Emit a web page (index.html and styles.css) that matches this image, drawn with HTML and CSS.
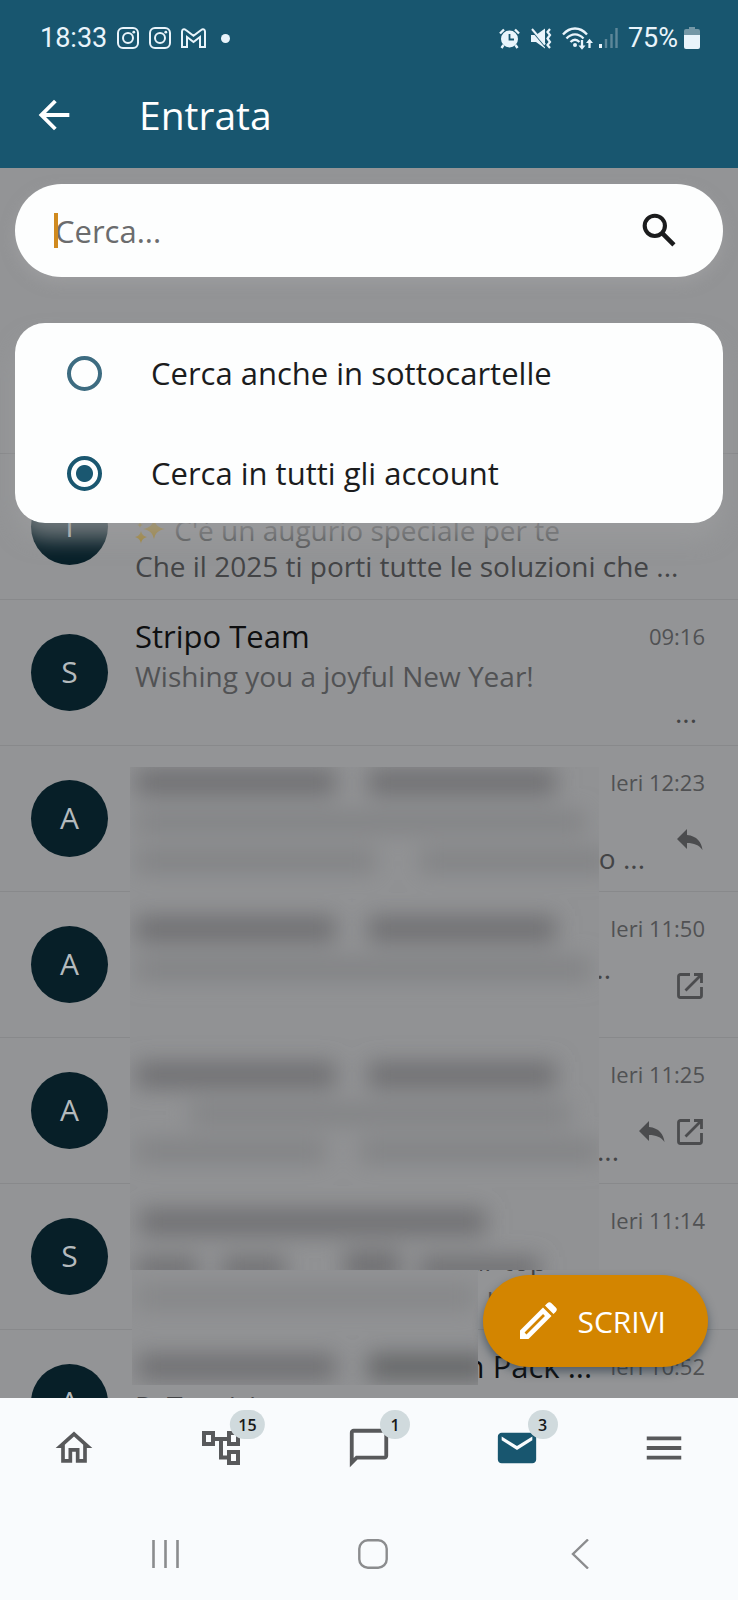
FILE: index.html
```html
<!DOCTYPE html>
<html lang="it">
<head>
<meta charset="utf-8">
<meta name="viewport" content="width=device-width, initial-scale=1">
<title>Entrata</title>
<link rel="stylesheet" href="styles.css">
</head>
<body>
<svg class="defs" width="0" height="0" aria-hidden="true">
  <symbol id="reply" viewBox="0 0 26 22"><path d="M10 6V0L0 10l10 10v-6c7 0 12 2 15.500 7C24.500 13 20 7 10 6z" fill="currentColor"/></symbol>
  <symbol id="open" viewBox="0 0 26 26"><path d="M13 1.500H3.500a2 2 0 0 0-2 2v19a2 2 0 0 0 2 2h19a2 2 0 0 0 2-2V14M17 1.500h7.500V10M24 2 8.500 17.500" fill="none" stroke="currentColor" stroke-width="2.800"/></symbol>
  <symbol id="insta" viewBox="0 0 22 22"><g fill="none" stroke="currentColor" stroke-width="2"><rect x="1" y="1" width="20" height="20" rx="5"/><circle cx="11" cy="11" r="5"/></g><circle cx="16.800" cy="5.200" r="1.400" fill="currentColor"/></symbol>
</svg>
<div class="app">
  <header class="header">
    <div class="status">
      <div class="status-left">
        <span class="clock">18:33</span>
        <svg width="22" height="22"><use href="#insta"/></svg>
        <svg width="22" height="22"><use href="#insta"/></svg>
        <svg width="25" height="20" viewBox="0 0 25 20"><path d="M1 19V3.500C1 1.500 3 .500 4.500 1.700l8 6 8-6C22 .500 24 1.500 24 3.500V19h-5V9l-6.500 5L6 9v10z" fill="none" stroke="currentColor" stroke-width="2"/></svg>
        <span class="dot"></span>
      </div>
      <div class="status-right">
        <svg width="21" height="21" viewBox="0 0 21 21"><circle cx="10.500" cy="11" r="8.500" fill="currentColor"/><path d="M1 5.500 5 1.500M20 5.500 16 1.500M4.500 17 2.500 20M16.500 17l2 3" stroke="currentColor" stroke-width="2.400" fill="none"/><path d="M10.500 6v5.500H15" stroke="#18566f" stroke-width="1.800" fill="none"/></svg>
        <svg class="mute" width="22" height="21" viewBox="0 0 22 21"><path d="M1 7h5l9-6.500v20L6 14H1z" fill="currentColor"/><path d="M0 0l16 19" stroke="#18566f" stroke-width="2"/><path d="M2 1l13 15.500" stroke="currentColor" stroke-width="2"/><path d="M20 1l-2.500 3L20 7l-2.500 3.500L20 14l-2.500 3 2.500 3" fill="none" stroke="currentColor" stroke-width="2.200"/></svg>
        <svg class="wifi" width="31" height="23" viewBox="0 0 31 23"><g fill="none" stroke="currentColor" stroke-width="2.300"><path d="M1 7.500C8-.500 18-.500 25 7.500M4.500 11.500c5-5.500 12-5.500 17 0M8.500 15c3-3 6-3 9 0"/><path d="M20 13v7M27.500 21v-7" /></g><circle cx="13" cy="18" r="2" fill="currentColor"/><path d="M16.500 18.500h7L20 22.800zM24 16h7l-3.500-4.300z" fill="currentColor"/></svg>
        <svg class="signal" width="19" height="20" viewBox="0 0 19 20"><path d="M1.500 16v4" stroke="currentColor" stroke-width="3"/><path d="M7 11v9M12.500 6v14M17.500 0v20" stroke="#5d8799" stroke-width="2.400"/></svg>
        <span class="clock">75%</span>
        <svg class="battery" width="16" height="22" viewBox="0 0 16 22"><path d="M5 0h6v2h3a2 2 0 0 1 2 2v6H0V4a2 2 0 0 1 2-2h3z" fill="#7497a6"/><path d="M0 8h16v12a2 2 0 0 1-2 2H2a2 2 0 0 1-2-2z" fill="currentColor"/></svg>
      </div>
    </div>
    <div class="titlebar">
      <button class="back" aria-label="Indietro"><svg width="46" height="46" viewBox="0 0 24 24"><path d="M20 11H7.830l5.590-5.590L12 4l-8 8 8 8 1.410-1.410L7.830 13H20z" fill="currentColor"/></svg></button>
      <h1 class="title">Entrata</h1>
    </div>
  </header>

  <main class="main">
    <ul class="list">
      <li class="row">
        <span class="avatar">T</span>
        <div class="body">
          <div class="top"><span class="name"></span></div>
          <div class="lines">
            <div class="text">
              <p class="line"><svg class="spark" width="32" height="26" viewBox="0 0 32 26"><path d="M19 0c1.500 6 4 8.500 11 10-7 1.500-9.500 4-11 10-1.500-6-4-8.500-11-10C15 8.500 17.500 6 19 0zM6 12c.8 3.500 2.500 5 6 6-3.500 1-5.200 2.500-6 6.500C5.200 20.500 3.500 19 0 18c3.500-1 5.200-2.500 6-6zM5 3c.4 2 1.200 2.600 3 3-1.800.4-2.600 1-3 3-.4-2-1.200-2.600-3-3 1.800-.4 2.600-1 3-3z" fill="#a5842a"/></svg> C'è un augurio speciale per te</p>
              <p class="line preview">Che il 2025 ti porti tutte le soluzioni che ...</p>
            </div>
          </div>
        </div>
      </li>
      <li class="row">
        <span class="avatar">S</span>
        <div class="body">
          <div class="top"><span class="name">Stripo Team</span><time>09:16</time></div>
          <div class="lines">
            <div class="text">
              <p class="line">Wishing you a joyful New Year!</p>
              <p class="line preview tail end-xs">...</p>
            </div>
          </div>
        </div>
      </li>
      <li class="row">
        <span class="avatar">A</span>
        <div class="body">
          <div class="top"><span class="name"></span><time>Ieri 12:23</time></div>
          <div class="lines">
            <div class="text end-m"><p class="line"></p><p class="line preview tail">o ...</p></div>
            <svg width="26" height="22"><use href="#reply"/></svg>
          </div>
        </div>
      </li>
      <li class="row">
        <span class="avatar">A</span>
        <div class="body">
          <div class="top"><span class="name"></span><time>Ieri 11:50</time></div>
          <div class="lines">
            <div class="text end-l"><p class="line preview tail">...</p><p class="line"></p></div>
            <svg width="26" height="26"><use href="#open"/></svg>
          </div>
        </div>
      </li>
      <li class="row">
        <span class="avatar">A</span>
        <div class="body">
          <div class="top"><span class="name"></span><time>Ieri 11:25</time></div>
          <div class="lines">
            <div class="text end-s"><p class="line"></p><p class="line preview tail">...</p></div>
            <svg width="26" height="22"><use href="#reply"/></svg>
            <svg width="26" height="26"><use href="#open"/></svg>
          </div>
        </div>
      </li>
      <li class="row">
        <span class="avatar">S</span>
        <div class="body">
          <div class="top"><span class="name"></span><time>Ieri 11:14</time></div>
          <div class="lines">
            <div class="text end-xl"><p class="line preview tail">ur top</p><p class="line tail">r me</p></div>
          </div>
        </div>
      </li>
      <li class="row">
        <span class="avatar">A</span>
        <div class="body">
          <div class="top"><span class="name tail">n Pack ...</span><time>Ieri 10:52</time></div>
          <div class="lines">
            <div class="text"><p class="line preview">R: Tecnici</p></div>
          </div>
        </div>
      </li>
    </ul>

    <svg class="mask mask-upper" width="469" height="503" viewBox="0 -4 469 503" aria-hidden="true">
      <filter id="soft" x="-20%" y="-20%" width="140%" height="140%"><feGaussianBlur stdDeviation="11"/></filter>
      <rect y="-4" width="469" height="503" fill="#919294"/>
      <g filter="url(#soft)">
        <g fill="#6f7072">
          <rect x="6" y="-2" width="200" height="26"/><rect x="238" y="-2" width="188" height="26"/>
          <rect x="6" y="145" width="200" height="26"/><rect x="238" y="145" width="188" height="26"/>
          <rect x="6" y="291" width="200" height="26"/><rect x="238" y="291" width="188" height="26"/>
          <rect x="10" y="438" width="346" height="26"/>
          <rect x="6" y="486" width="62" height="24"/><rect x="92" y="486" width="64" height="24"/><rect x="214" y="480" width="56" height="30"/><rect x="290" y="486" width="120" height="24"/>
        </g>
        <g fill="#828385">
          <rect x="6" y="40" width="450" height="22"/><rect x="6" y="78" width="240" height="24"/><rect x="290" y="78" width="190" height="24"/>
          <rect x="6" y="186" width="455" height="24"/>
          <rect x="60" y="332" width="380" height="22"/><rect x="6" y="368" width="190" height="24"/><rect x="230" y="368" width="240" height="24"/>
        </g>
      </g>
    </svg>
    <svg class="mask mask-lower" width="346" height="115" viewBox="0 0 346 115" aria-hidden="true">
      <rect width="346" height="115" fill="#919294"/>
      <g filter="url(#soft)">
        <rect x="4" y="14" width="340" height="26" fill="#868789"/>
        <rect x="6" y="84" width="198" height="26" fill="#6f7072"/><rect x="236" y="84" width="120" height="26" fill="#656668"/>
      </g>
    </svg>

    <div class="overlay">
      <form class="search">
        <input class="field" type="text" placeholder="Cerca..." aria-label="Cerca">
        <span class="caret"></span>
        <button class="go" type="button" aria-label="Avvia ricerca"><svg width="45" height="45" viewBox="0 0 24 24"><circle cx="9.500" cy="9.500" r="5.400" fill="none" stroke="currentColor" stroke-width="2.200"/><path d="M13.300 13.300 19.700 19.700" stroke="currentColor" stroke-width="2.400"/></svg></button>
      </form>
      <fieldset class="options">
        <label class="option"><input class="radio" type="radio" name="scope"><span>Cerca anche in sottocartelle</span></label>
        <label class="option"><input class="radio" type="radio" name="scope" checked><span>Cerca in tutti gli account</span></label>
      </fieldset>
    </div>

    <button class="fab">
      <svg width="38" height="38" viewBox="0 0 38 38"><path d="M1 37v-8.500L24 5.500 32.500 14 9.500 37zM26 3.500l2.300-2.300a3 3 0 0 1 4.200 0l4.300 4.300a3 3 0 0 1 0 4.200L34.500 12z" fill="currentColor"/><path d="M6.500 31.500 25 13" stroke="#d38500" stroke-width="2.600"/></svg>
      <span>SCRIVI</span>
    </button>
  </main>

  <footer class="footer">
    <nav class="tabs">
      <a class="tab" href="#" aria-label="Home"><svg width="44" height="44" viewBox="0 0 24 24"><path d="M12 5.690l5 4.500V18h-2v-6H9v6H7v-7.810l5-4.500M12 3L2 12h3v8h6v-6h2v6h6v-8h3L12 3z" fill="currentColor"/></svg></a>
      <a class="tab" href="#" aria-label="Cartelle"><svg width="44" height="44" viewBox="0 0 44 44"><g fill="none" stroke="currentColor" stroke-width="4"><rect x="5" y="7" width="9" height="11"/><rect x="30" y="7" width="9" height="11"/><rect x="30" y="26" width="9" height="11"/><path d="M14 13h16M22 13v18.500h8"/></g></svg><span class="badge">15</span></a>
      <a class="tab" href="#" aria-label="Messaggi"><svg width="46" height="46" viewBox="0 0 24 24"><path d="M4 4h16v12H5.170L4 17.170V4m0-2c-1.100 0-1.990.9-1.990 2L2 22l4-4h14c1.100 0 2-.9 2-2V4c0-1.100-.9-2-2-2H4z" fill="currentColor"/></svg><span class="badge">1</span></a>
      <a class="tab active" href="#" aria-label="Posta"><svg width="46" height="46" viewBox="0 0 24 24"><path d="M20 4H4c-1.100 0-1.990.9-1.990 2L2 18c0 1.100.9 2 2 2h16c1.100 0 2-.9 2-2V6c0-1.100-.9-2-2-2zm0 4l-8 5-8-5V6l8 5 8-5v2z" fill="currentColor"/></svg><span class="badge">3</span></a>
      <a class="tab" href="#" aria-label="Menu"><svg width="46" height="46" viewBox="0 0 24 24"><path d="M3 18h18v-2H3v2zm0-5h18v-2H3v2zm0-7v2h18V6H3z" fill="currentColor"/></svg></a>
    </nav>
    <div class="system">
      <button class="key" aria-label="Recenti"><svg width="30" height="30" viewBox="0 0 30 30"><path d="M2.500 1v28M14.500 1v28M26.500 1v28" stroke="currentColor" stroke-width="2.600"/></svg></button>
      <button class="key" aria-label="Schermata principale"><svg width="30" height="30" viewBox="0 0 30 30"><rect x="1.300" y="1.300" width="27.400" height="27.400" rx="8.500" fill="none" stroke="currentColor" stroke-width="2.400"/></svg></button>
      <button class="key" aria-label="Torna indietro"><svg width="30" height="30" viewBox="0 0 30 30"><path d="M23 .500 8 15l15 14.500" fill="none" stroke="currentColor" stroke-width="2.400"/></svg></button>
    </div>
  </footer>
</div>
</body>
</html>
```
FILE: styles.css
```css
* { box-sizing: border-box; }
body { margin: 0; font-family: "Open Sans", "Noto Sans", sans-serif; }
button { border: 0; padding: 0; background: none; color: inherit; font: inherit; }
svg { display: block; flex: none; }
p, h1, ul { margin: 0; padding: 0; font-weight: 400; }
.defs { position: absolute; }
.app { display: flex; flex-direction: column; height: 100vh; overflow: hidden; }

.header { background: #18566f; color: #fff; padding-bottom: 14px; }
.status { display: flex; justify-content: space-between; align-items: center; height: 76px; padding: 0 38px 0 40px; color: #e9f4fb; }
.status-left { display: flex; align-items: center; gap: 10px; }
.status-right { display: flex; align-items: center; gap: 10px; }
.clock { font-family: Roboto, sans-serif; font-size: 27px; line-height: 32px; }
.dot { width: 9px; height: 9px; margin-left: 5px; border-radius: 50%; background: currentColor; }
.signal { margin-left: -4px; }
.battery { margin-left: -4px; }
.titlebar { display: flex; align-items: center; height: 78px; padding-left: 31px; gap: 62px; }
.title { font-size: 39px; line-height: 54px; }

.main { position: relative; flex: 1; min-height: 0; overflow: hidden; background: #939496; }
.list { list-style: none; padding-top: 285px; }
.row { display: flex; gap: 27px; height: 146px; padding: 14px 33px 0 31px; border-top: 1px solid #88898b; }
.avatar { flex: none; align-self: flex-start; width: 77px; height: 77px; margin-top: 20px; border-radius: 50%; background: #071f28; color: #b4babd; font-size: 30px; line-height: 76px; text-align: center; }
.body { flex: 1; min-width: 0; }
.top { display: flex; justify-content: space-between; height: 44px; line-height: 44px; gap: 18px; color: #0e0f10; }
.name { flex: 1; font-size: 31px; white-space: nowrap; }
time { font-size: 22px; color: #505153; }
.lines { display: flex; align-items: center; gap: 12px; height: 72px; padding-right: 2px; color: #4b4c4e; }
.text { flex: 1; min-width: 0; height: 72px; }
.line { height: 36px; font-size: 28px; line-height: 36px; white-space: nowrap; color: #515254; }
.preview { color: #434446; }
.tail { text-align: right; }
.end-xs { padding-right: 6px; }
.end-s { padding-right: 8px; }
.end-m { padding-right: 20px; }
.end-l { padding-right: 54px; }
.end-xl { padding-right: 156px; }
.spark { display: inline-block; vertical-align: -4px; }

.mask { position: absolute; overflow: hidden; }
.mask-upper { left: 130px; top: 599px; }
.mask-lower { left: 132px; top: 1102px; }

.overlay { position: absolute; inset: 0; display: flex; flex-direction: column; gap: 46px; padding: 16px 15px 0; }
.search { position: relative; display: flex; align-items: center; height: 93px; padding: 0 41px 0 40px; border-radius: 47px; background: #fdfefe; box-shadow: 0 6px 14px rgba(165, 166, 168, .5); }
.field { flex: 1; min-width: 0; border: 0; padding: 0; outline: 0; background: none; font: 31px/40px "Open Sans", sans-serif; color: #1b1c1d; }
.field::placeholder { color: #6b6c6d; opacity: 1; }
.caret { position: absolute; left: 39px; top: 29px; width: 4px; height: 35px; background: #d08a1f; }
.go { color: #1b1c1d; }
.options { margin: 0; border: 0; padding: 0; border-radius: 30px; background: #fdfefe; box-shadow: 0 16px 22px rgba(155, 156, 158, .7); }
.option { display: flex; align-items: center; height: 100px; padding-left: 52px; gap: 49px; font-size: 31px; line-height: 44px; color: #1b1c1d; }
.radio { appearance: none; flex: none; width: 35px; height: 35px; margin: 0; border: 4px solid #3d6c81; border-radius: 50%; }
.radio:checked { border-color: #1a5770; background: radial-gradient(circle, #1a5770 8px, transparent 9px); }

.fab { position: absolute; right: 30px; bottom: 31px; display: flex; align-items: center; gap: 20px; height: 92px; padding: 0 42px 0 36px; border-radius: 46px; background: #d38500; color: #fff; font-size: 30px; box-shadow: 0 5px 10px rgba(20, 40, 55, .5); }

.footer { background: #f9fbfd; }
.tabs { display: flex; height: 100px; }
.tab { position: relative; flex: 1; display: flex; align-items: center; justify-content: center; color: #58595b; text-decoration: none; }
.active { color: #18566f; }
.badge { position: absolute; top: 12px; left: calc(50% + 26px); transform: translateX(-50%); min-width: 30px; height: 29px; padding: 0 8px; border-radius: 15px; background: #d0dadd; color: #17191a; font-size: 16px; font-weight: 600; line-height: 31px; text-align: center; }
.system { display: flex; height: 102px; padding: 10px 55px 0 63px; }
.key { flex: 1; display: flex; align-items: center; justify-content: center; color: #8b8c8e; }
```
